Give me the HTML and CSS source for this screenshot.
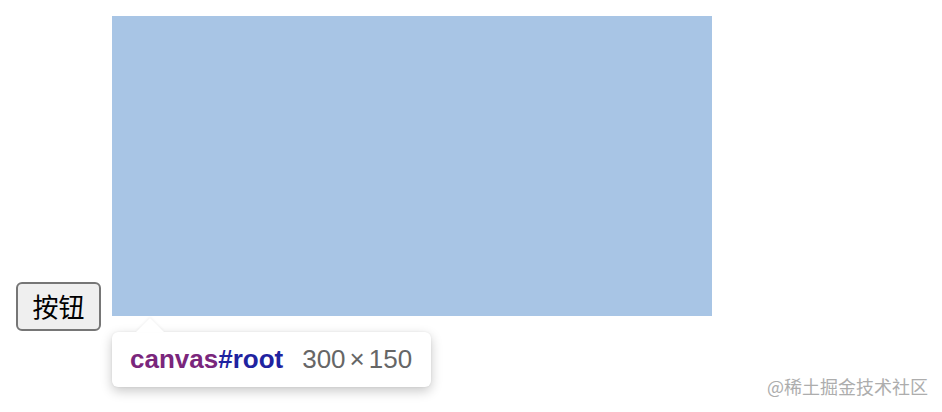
FILE: index.html
```html
<!DOCTYPE html>
<html lang="zh">
<head>
<meta charset="utf-8">
<link rel="stylesheet" href="styles.css">
</head>
<body>
<div class="row"><button class="btn">按钮</button><div class="canvas"></div></div>
<div class="tip">
  <span class="tip-arrow"></span>
  <span class="tag">canvas</span><span class="id">#root</span>
  <span class="size">300<span class="x">×</span>150</span>
</div>
<div class="mark">@稀土掘金技术社区</div>
</body>
</html>
```
FILE: styles.css
```css
html, body {
  margin: 0;
  padding: 0;
  background: #ffffff;
}
body {
  padding: 16px;
  font-family: "Liberation Sans", "Noto Sans CJK SC", sans-serif;
}
.row {
  font-size: 0;
  line-height: 0;
}
.btn {
  display: inline-block;
  vertical-align: -1px;
  box-sizing: border-box;
  width: 85px;
  height: 49px;
  padding: 0 12px;
  margin: 0;
  font-family: "Noto Sans CJK SC", sans-serif;
  font-size: 26px;
  line-height: 30px;
  color: #000000;
  background: #efefef;
  border: 2px solid #767676;
  border-radius: 6px;
}
.canvas {
  display: inline-block;
  vertical-align: baseline;
  width: 600px;
  height: 300px;
  margin-left: 11px;
  background: #a8c5e5;
}
.tip {
  position: absolute;
  left: 112px;
  top: 332px;
  box-sizing: border-box;
  width: 319px;
  height: 55px;
  padding: 0 18px;
  display: flex;
  align-items: center;
  background: #ffffff;
  border-radius: 6px;
  box-shadow: 0 4px 12px rgba(0, 0, 0, 0.22), 0 0 2px rgba(0, 0, 0, 0.08);
  font-size: 26px;
  line-height: 29px;
  white-space: nowrap;
}
.tip-arrow {
  position: absolute;
  left: 24px;
  top: -14px;
  width: 0;
  height: 0;
  border-left: 14px solid transparent;
  border-right: 14px solid transparent;
  border-bottom: 14px solid #ffffff;
  filter: drop-shadow(0 -1px 1px rgba(0, 0, 0, 0.06));
}
.tag {
  font-weight: bold;
  color: #7a267c;
}
.id {
  font-weight: bold;
  color: #1f23a0;
}
.size {
  margin-left: 19px;
  color: #666666;
}
.x {
  margin: 0 4px;
}
.mark {
  position: absolute;
  right: 14px;
  top: 373px;
  font-family: "Noto Sans CJK SC", sans-serif;
  font-size: 18px;
  line-height: 26px;
  color: #adadad;
  white-space: nowrap;
}
```
